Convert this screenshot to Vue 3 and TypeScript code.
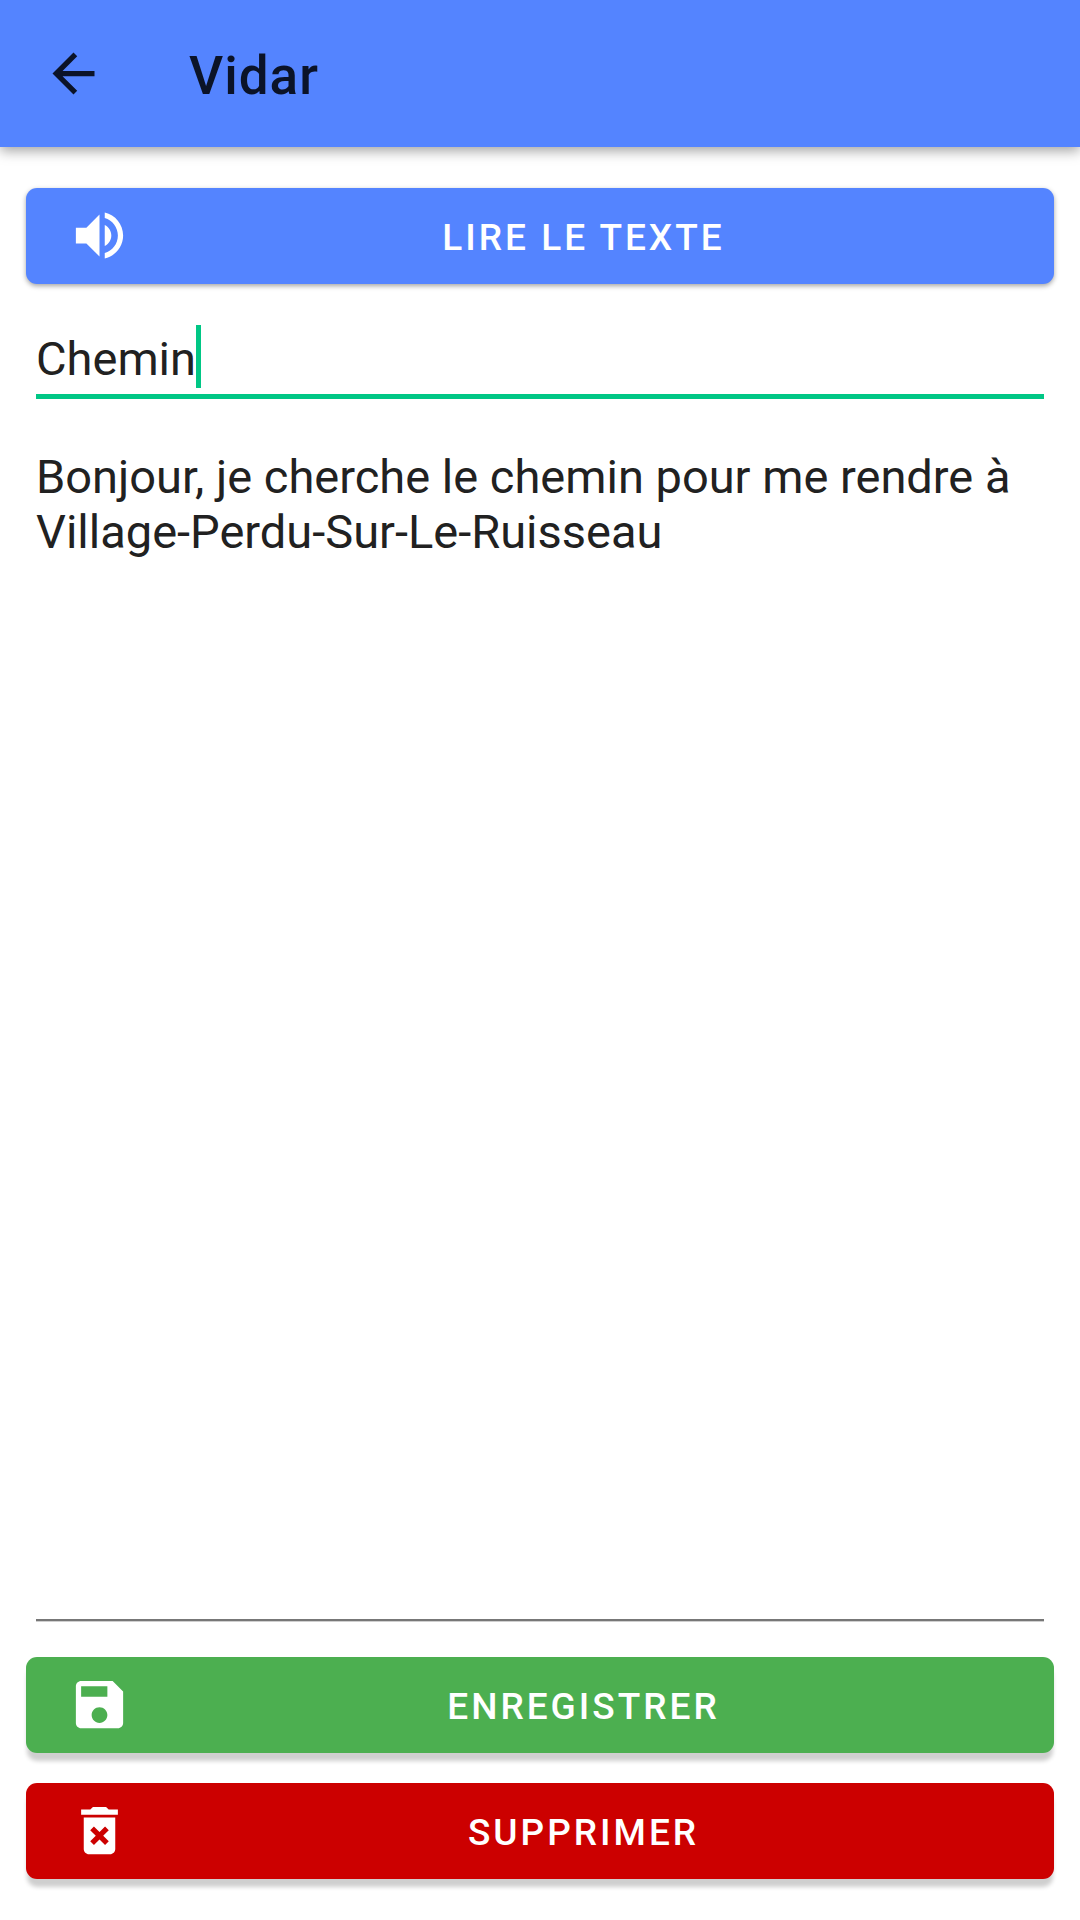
<script setup lang="ts">
import { ref } from 'vue'

const title = ref('Chemin')
const message = ref(
  'Bonjour, je cherche le chemin pour me rendre à Village-Perdu-Sur-Le-Ruisseau'
)
</script>

<template>
  <div class="screen">
    <header class="app-bar">
      <button class="back" type="button" aria-label="Retour">
        <svg viewBox="0 0 24 24" aria-hidden="true">
          <path d="M20 11H7.83l5.59-5.59L12 4l-8 8 8 8 1.41-1.41L7.83 13H20v-2z" />
        </svg>
      </button>
      <h1>Vidar</h1>
    </header>

    <main>
      <button class="action read" type="button">
        <svg viewBox="0 0 24 24" aria-hidden="true">
          <path
            d="M3 9v6h4l5 5V4L7 9H3zm13.5 3c0-1.77-1.02-3.29-2.5-4.03v8.05c1.48-.73 2.5-2.25 2.5-4.02zM14 3.23v2.06c2.89.86 5 3.54 5 6.71s-2.11 5.85-5 6.71v2.06c4.01-.91 7-4.49 7-8.77s-2.99-7.86-7-8.77z"
          />
        </svg>
        <span>LIRE LE TEXTE</span>
      </button>

      <div class="title-field">
        <input v-model="title" type="text" aria-label="Titre" />
        <span class="caret" aria-hidden="true"></span>
      </div>

      <textarea v-model="message" class="message" aria-label="Texte"></textarea>

      <div class="actions">
        <button class="action save" type="button">
          <svg viewBox="0 0 24 24" aria-hidden="true">
            <path
              d="M17 3H5c-1.11 0-2 .9-2 2v14c0 1.1.89 2 2 2h14c1.1 0 2-.9 2-2V7l-4-4zm-5 16c-1.66 0-3-1.34-3-3s1.34-3 3-3 3 1.34 3 3-1.34 3-3 3zm3-10H5V5h10v4z"
            />
          </svg>
          <span>ENREGISTRER</span>
        </button>
        <button class="action delete" type="button">
          <svg viewBox="0 0 24 24" aria-hidden="true">
            <path
              d="M6 19c0 1.1.9 2 2 2h8c1.1 0 2-.9 2-2V7H6v12zm2.46-7.12l1.41-1.41L12 12.59l2.12-2.12 1.41 1.41L13.41 14l2.12 2.12-1.41 1.41L12 15.41l-2.12 2.12-1.41-1.41L10.59 14l-2.13-2.12zM15.5 4l-1-1h-5l-1 1H5v2h14V4z"
            />
          </svg>
          <span>SUPPRIMER</span>
        </button>
      </div>
    </main>
  </div>
</template>

<style>
body {
  background: #fff;
}
</style>

<style scoped>
.screen {
  display: flex;
  flex-direction: column;
  min-height: 100vh;
  font-family: Roboto, sans-serif;
  color: #212121;
}

button,
input,
textarea {
  margin: 0;
  padding: 0;
  border: 0;
  background: none;
  font: inherit;
  color: inherit;
  outline: none;
}

svg {
  display: block;
  flex: none;
  width: 63px;
  height: 63px;
  fill: currentColor;
}

.app-bar {
  display: flex;
  align-items: center;
  gap: 84px;
  height: 147px;
  padding: 0 42px;
  background: #5484ff;
  color: #0b1328;
  box-shadow: 0 4px 12px rgba(0, 0, 0, 0.36);
}

h1 {
  margin: 0;
  padding-top: 4px;
  font-size: 53px;
  line-height: 62px;
  font-weight: 500;
  letter-spacing: 1px;
}

main {
  display: flex;
  flex: 1;
  flex-direction: column;
  padding: 41px 26px;
}

.action {
  display: flex;
  align-items: center;
  gap: 24px;
  width: 100%;
  height: 96px;
  padding: 0 42px 1px;
  border-radius: 11px;
  color: #fff;
  font-size: 37px;
  font-weight: 500;
  line-height: 44px;
  letter-spacing: 3px;
}

.action span {
  flex: 1;
  padding-top: 4px;
  text-align: center;
}

.read {
  background: #5484ff;
  box-shadow: 0 2px 5px rgba(0, 0, 0, 0.36);
}

.save {
  background: #4caf50;
}

.delete {
  background: #cc0000;
}

.save,
.delete {
  box-shadow: 0 9px 4px -1px #cfcfcf;
}

.title-field {
  display: flex;
  align-items: flex-start;
  height: 69px;
  margin: 41px 10px 0;
  border-bottom: 5px solid #00c785;
}

.title-field input {
  field-sizing: content;
  max-width: 100%;
  height: 67px;
  font-size: 47px;
  line-height: 67px;
  caret-color: transparent;
}

.caret {
  width: 5px;
  height: 63px;
  background: #00c785;
}

.message {
  flex: 1;
  margin: 0 10px 36px;
  padding-top: 50px;
  border-bottom: 2px solid #777;
  box-shadow: 0 1px #cfcfcf;
  font-size: 47px;
  line-height: 55px;
  resize: none;
}

.actions {
  display: flex;
  flex-direction: column;
  gap: 30px;
}
</style>
